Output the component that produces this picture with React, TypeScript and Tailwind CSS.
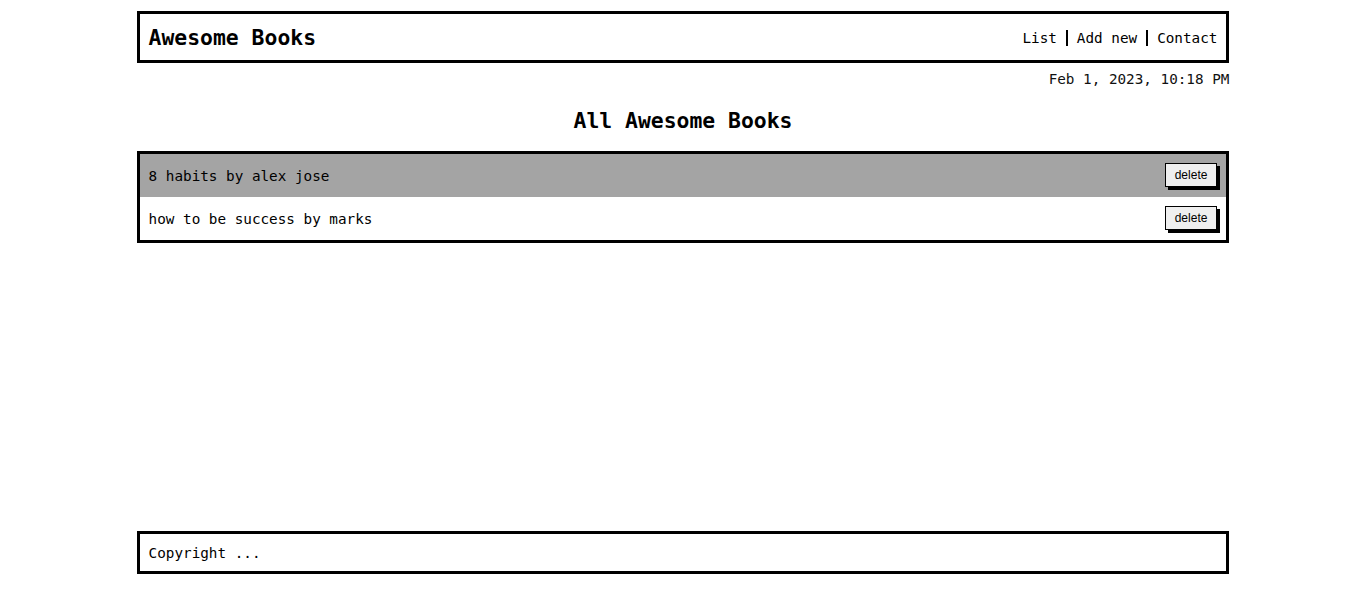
const books = [
  { id: 1, title: "8 habits", author: "alex jose" },
  { id: 2, title: "how to be success", author: "marks" },
];

export default function App() {
  return (
    <div className="min-h-screen flex flex-col bg-white text-black" style={{ fontFamily: '"DejaVu Sans Mono", "Liberation Mono", monospace' }}>
      <div className="w-4/5 mx-auto flex-1 flex flex-col">
        {/* Header */}
        <header className="mt-[11px] h-[52px] border-[3px] border-black flex items-center justify-between px-[9px] pt-[2px]">
          <h1 className="text-[21.4px] font-bold leading-none">Awesome Books</h1>
          <nav className="flex items-center text-[14.3px] leading-none">
            <a className="pr-[9px]">List</a>
            <a className="border-l-2 border-black px-[9px] py-[1px]">Add new</a>
            <a className="border-l-2 border-black pl-[9px] py-[1px]">Contact</a>
          </nav>
        </header>

        <p className="text-right text-[14.3px] leading-none mt-[9px] text-[#111]">Feb 1, 2023, 10:18 PM</p>

        <h2 className="text-center text-[21.4px] font-bold leading-none mt-[24px]">All Awesome Books</h2>

        {/* Book list */}
        <ul className="mt-[19px] border-[3px] border-black">
          {books.map((b, i) => (
            <li
              key={b.id}
              className={`h-[43px] flex items-center justify-between pl-[9px] pr-[9px] ${i % 2 === 0 ? "bg-[#a4a4a4]" : "bg-white"}`}
            >
              <span className="text-[14.3px] leading-none pt-[1px]">
                {b.title} by {b.author}
              </span>
              <button
                className="h-[24px] px-[9px] bg-[#efefef] border border-black shadow-[3px_3px_0_#000] text-[12px] leading-none"
                style={{ fontFamily: '"Liberation Sans", Arial, sans-serif' }}
              >
                delete
              </button>
            </li>
          ))}
        </ul>
      </div>

      {/* Footer */}
      <footer className="w-4/5 mx-auto mb-[36px] h-[43px] border-[3px] border-black flex items-center px-[9px] pt-[1px]">
        <p className="text-[14.3px] leading-none">Copyright ...</p>
      </footer>
    </div>
  );
}
